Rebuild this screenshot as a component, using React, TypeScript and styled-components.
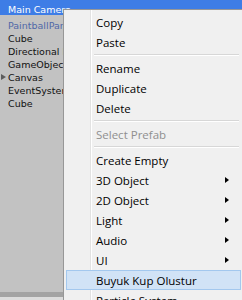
import React from 'react'
import styled, { createGlobalStyle } from 'styled-components'

const GlobalStyle = createGlobalStyle`
	html, body {
		margin: 0;
		padding: 0;
		background: #c2c2c2;
	}
`

interface HierarchyItem {
	name: string
	prefab?: boolean
	selected?: boolean
	foldout?: boolean
}

const hierarchy: HierarchyItem[] = [
	{ name: 'Main Camera', selected: true },
	{ name: 'PaintballParent', prefab: true },
	{ name: 'Cube' },
	{ name: 'Directional Light' },
	{ name: 'GameObject' },
	{ name: 'Canvas', foldout: true },
	{ name: 'EventSystem' },
	{ name: 'Cube' },
]

type MenuEntry =
	| { kind: 'item'; label: string; disabled?: boolean; submenu?: boolean; hover?: boolean }
	| { kind: 'sep' }

const menu: MenuEntry[] = [
	{ kind: 'item', label: 'Copy' },
	{ kind: 'item', label: 'Paste' },
	{ kind: 'sep' },
	{ kind: 'item', label: 'Rename' },
	{ kind: 'item', label: 'Duplicate' },
	{ kind: 'item', label: 'Delete' },
	{ kind: 'sep' },
	{ kind: 'item', label: 'Select Prefab', disabled: true },
	{ kind: 'sep' },
	{ kind: 'item', label: 'Create Empty' },
	{ kind: 'item', label: '3D Object', submenu: true },
	{ kind: 'item', label: '2D Object', submenu: true },
	{ kind: 'item', label: 'Light', submenu: true },
	{ kind: 'item', label: 'Audio', submenu: true },
	{ kind: 'item', label: 'UI', submenu: true },
	{ kind: 'item', label: 'Buyuk Kup Olustur', hover: true },
	{ kind: 'item', label: 'Particle System' },
]

export default function App() {
	return (
		<>
			<GlobalStyle />
			<StyledScreen>
				<StyledHierarchy>
					<StyledList>
						{hierarchy.map((item, i) => (
							<StyledRow key={i} $selected={item.selected}>
								{item.foldout ? <StyledFoldout /> : null}
								<StyledName $prefab={item.prefab} $selected={item.selected}>
									{item.name}
								</StyledName>
							</StyledRow>
						))}
					</StyledList>
					<StyledFooter />
				</StyledHierarchy>

				<StyledMenu>
					{menu.map((entry, i) =>
						entry.kind === 'sep' ? (
							<StyledSeparator key={i} />
						) : (
							<StyledItem key={i} $disabled={entry.disabled} $hover={entry.hover}>
								<span>{entry.label}</span>
								{entry.submenu ? <StyledArrow /> : null}
							</StyledItem>
						),
					)}
				</StyledMenu>
			</StyledScreen>
		</>
	)
}

const StyledScreen = styled.div`
	position: relative;
	width: 242px;
	height: 300px;
	overflow: hidden;
	background: #c2c2c2;
`

const StyledHierarchy = styled.div`
	display: flex;
	flex-direction: column;
	height: 100%;
`

const StyledList = styled.div`
	flex: 1;
`

const StyledRow = styled.div<{ $selected?: boolean }>`
	position: relative;
	display: flex;
	align-items: center;
	height: 13px;
	padding-left: 8px;
	background: ${(p) => (p.$selected ? '#3e7de6' : 'transparent')};
	&:first-child {
		height: 15px;
		align-items: flex-end;
		margin-bottom: 4px;
	}
`

const StyledName = styled.span<{ $prefab?: boolean; $selected?: boolean }>`
	font-family: 'DejaVu Sans', Verdana, sans-serif;
	font-size: 9.5px;
	line-height: 11px;
	white-space: nowrap;
	color: ${(p) => (p.$selected ? '#ffffff' : p.$prefab ? '#5068a8' : '#111111')};
`

const StyledFoldout = styled.span`
	position: absolute;
	left: 1px;
	top: 3px;
	width: 0;
	height: 0;
	border-top: 3.5px solid transparent;
	border-bottom: 3.5px solid transparent;
	border-left: 5px solid #5c5c5c;
`

const StyledFooter = styled.div`
	height: 8px;
	border-top: 5px solid #a3a3a3;
	background: #dcdcdc;
	box-sizing: border-box;
`

const StyledMenu = styled.div`
	position: absolute;
	left: 63px;
	top: 9px;
	width: 181px;
	box-sizing: border-box;
	padding: 2px;
	background: linear-gradient(to right, transparent 26px, #e2e2e2 26px, #e2e2e2 27px, #ffffff 27px, #ffffff 28px, transparent 28px), #f0f0f0;
	border: 1px solid #979797;
	font-family: 'Open Sans', 'Noto Sans', sans-serif;
	font-size: 11.5px;
`

const StyledItem = styled.div<{ $disabled?: boolean; $hover?: boolean }>`
	position: relative;
	display: flex;
	align-items: center;
	height: 20px;
	box-sizing: border-box;
	padding-left: 29px;
	color: ${(p) => (p.$disabled ? '#8f8f8f' : '#000000')};
	background: ${(p) => (p.$hover ? '#d1e3f6' : 'transparent')};
	border: 1px solid ${(p) => (p.$hover ? '#a3c8ee' : 'transparent')};
	white-space: nowrap;
`

const StyledArrow = styled.span`
	position: absolute;
	right: 11px;
	top: 6px;
	width: 0;
	height: 0;
	border-top: 3.5px solid transparent;
	border-bottom: 3.5px solid transparent;
	border-left: 4px solid #000000;
`

const StyledSeparator = styled.div`
	height: 6px;
	margin-left: 28px;
	margin-right: 2px;
	display: flex;
	flex-direction: column;
	justify-content: center;
	&::before {
		content: '';
		display: block;
		height: 1px;
		background: #d7d7d7;
	}
	&::after {
		content: '';
		display: block;
		height: 1px;
		background: #ffffff;
	}
`
